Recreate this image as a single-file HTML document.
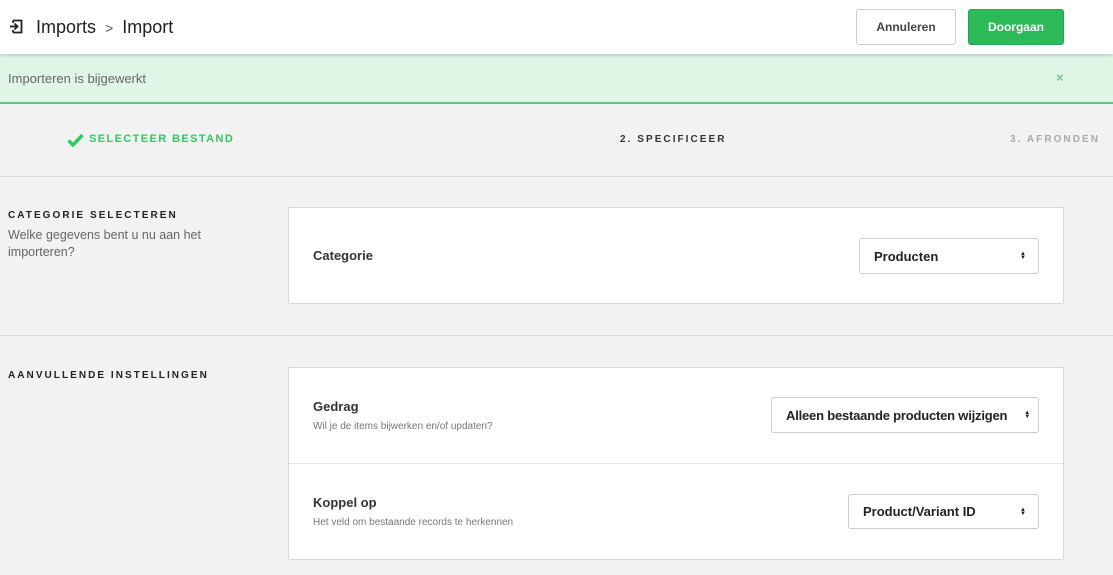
<!DOCTYPE html><html><head><style>
*{box-sizing:border-box;margin:0;padding:0}
body{width:1113px;height:575px;overflow:hidden;background:#f2f2f2;font-family:"Liberation Sans",sans-serif;color:#333;position:relative}
.a{position:absolute}
.hdr{left:0;top:0;width:1113px;height:54px;background:#fff;box-shadow:0 1px 4px rgba(0,0,0,.2);z-index:2}
.btn{position:absolute;top:9px;height:36px;border-radius:3px;font-size:12px;font-weight:bold;display:flex;align-items:center;justify-content:center}
.card{position:absolute;left:288px;width:776px;background:#fff;border:1px solid #d8d8d8;border-radius:2px}
.sel{position:absolute;background:#fff;border:1px solid #ccc;border-radius:3px;font-size:13px;font-weight:bold;color:#222;display:flex;align-items:center;padding-left:14px;white-space:nowrap}
.sel span.ar{position:absolute;right:12px;top:50%;margin-top:-4px;font-size:6px;line-height:4px;font-weight:normal}
.lbl{font-size:13px;font-weight:bold;color:#333}
.sub{font-size:10px;color:#777}
.sec{font-size:10px;font-weight:bold;letter-spacing:2.05px;color:#222}
</style></head><body>
<div class="a hdr">
<svg class="a" style="left:9px;top:19px" width="15" height="15" viewBox="0 0 15 15" fill="none" stroke="#222" stroke-width="1.8"><path d="M4 1.5h8.5v12H4M4 4V1.5M4 11v2.5"/><path d="M1 7.5h7M5.5 4.5l3 3-3 3"/></svg>
<div class="a" style="left:36px;top:17px;font-size:18px;color:#222">Imports <span style="font-size:14px;color:#555;margin:0 4px">&gt;</span> Import</div>
<div class="btn" style="left:856px;width:100px;background:#fff;border:1px solid #ccc;color:#444">Annuleren</div>
<div class="btn" style="left:968px;width:96px;background:#2dbb5a;border:1px solid #27a24e;color:#fff">Doorgaan</div>
</div>
<div class="a" style="left:0;top:54px;width:1113px;height:50px;background:#dff5e6;border-bottom:2px solid #5cc47c"></div>
<div class="a" style="left:8px;top:71px;font-size:13px;color:#666">Importeren is bijgewerkt</div>
<div class="a" style="left:1056px;top:70px;font-size:13px;color:#7ac08c;font-weight:bold">×</div>
<svg class="a" style="left:67px;top:133px" width="17" height="14" viewBox="0 0 17 14"><path d="M1.5 7.5l4.5 4.5 9.5-10" stroke="#2dcc60" stroke-width="3.5" fill="none"/></svg>
<div class="a sec" style="left:89px;top:133px;color:#2dcc60;font-size:11px;letter-spacing:1.4px">SELECTEER BESTAND</div>
<div class="a sec" style="left:620px;top:134px;color:#333">2. SPECIFICEER</div>
<div class="a sec" style="left:1010px;top:134px;color:#aaa">3. AFRONDEN</div>
<div class="a" style="left:0;top:176px;width:1113px;height:1px;background:#ddd"></div>
<div class="a sec" style="left:8px;top:210px">CATEGORIE SELECTEREN</div>
<div class="a" style="left:8px;top:227px;font-size:12.5px;color:#666;line-height:17px">Welke gegevens bent u nu aan het<br>importeren?</div>
<div class="card" style="top:207px;height:97px"></div>
<div class="a lbl" style="left:313px;top:248px">Categorie</div>
<div class="sel" style="left:859px;top:238px;width:180px;height:36px">Producten<span class="ar">▲<br>▼</span></div>
<div class="a" style="left:0;top:335px;width:1113px;height:1px;background:#ddd"></div>
<div class="a sec" style="left:8px;top:370px">AANVULLENDE INSTELLINGEN</div>
<div class="card" style="top:367px;height:193px"></div>
<div class="a" style="left:289px;top:463px;width:774px;height:1px;background:#e3e3e3"></div>
<div class="a lbl" style="left:313px;top:399px">Gedrag</div>
<div class="a sub" style="left:313px;top:421px">Wil je de items bijwerken en/of updaten?</div>
<div class="sel" style="left:771px;top:397px;width:268px;height:36px;letter-spacing:-0.2px">Alleen bestaande producten wijzigen<span class="ar" style="right:8px">▲<br>▼</span></div>
<div class="a lbl" style="left:313px;top:495px">Koppel op</div>
<div class="a sub" style="left:313px;top:517px">Het veld om bestaande records te herkennen</div>
<div class="sel" style="left:848px;top:494px;width:191px;height:35px">Product/Variant ID<span class="ar">▲<br>▼</span></div>
</body></html>
